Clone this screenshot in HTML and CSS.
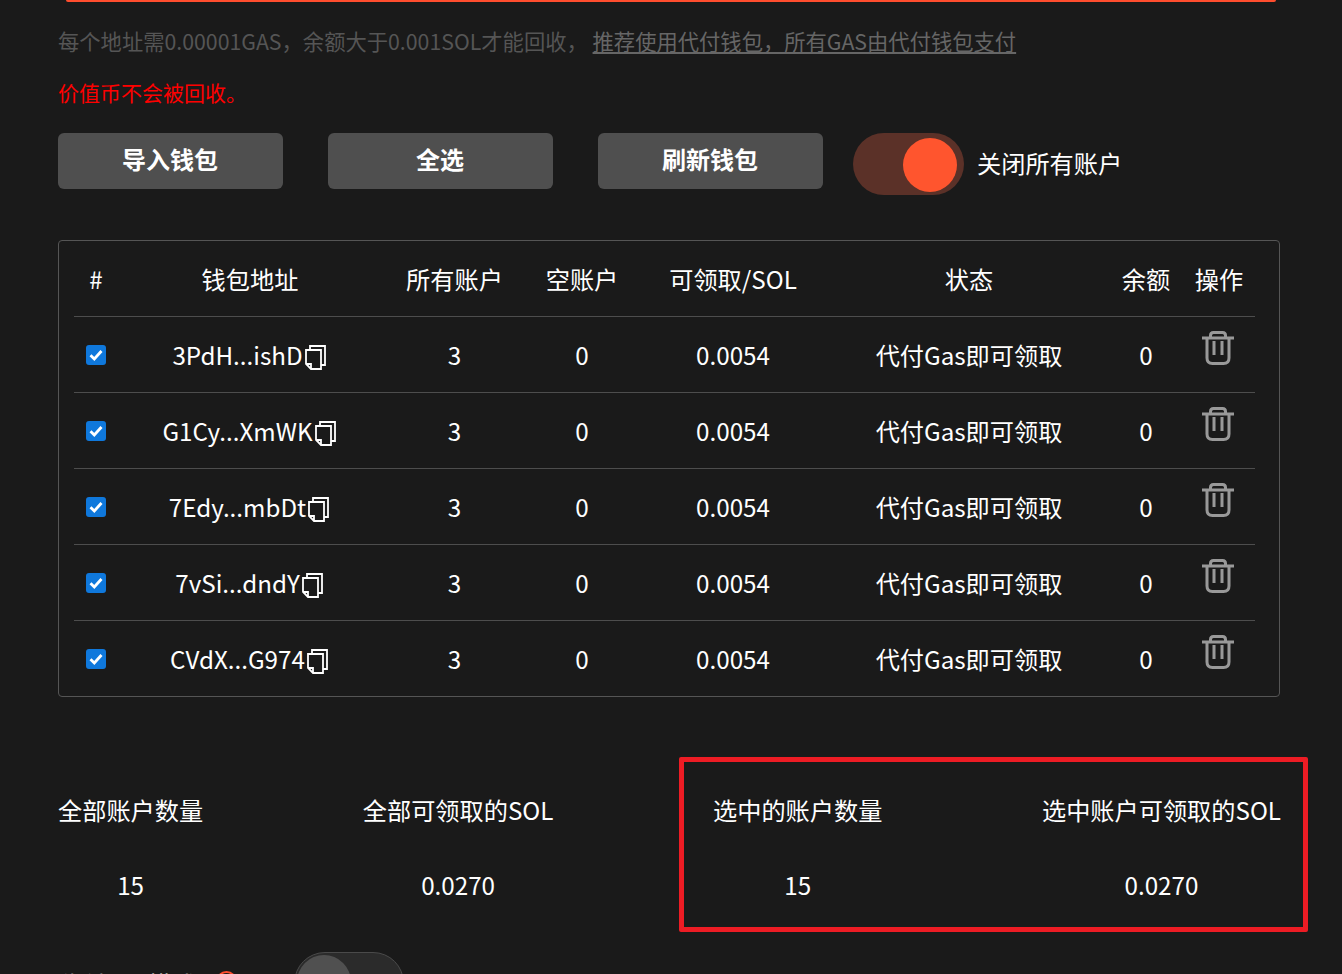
FILE: index.html
```html
<!DOCTYPE html>
<html lang="zh">
<head>
<meta charset="utf-8">
<title>关闭账户</title>
<link rel="stylesheet" href="styles.css">
</head>
<body>
<main class="page">
  <div class="topbox"></div>
  <p class="note">每个地址需0.00001GAS，余额大于0.001SOL才能回收， <a class="note-link">推荐使用代付钱包，所有GAS由代付钱包支付</a></p>
  <p class="warn">价值币不会被回收。</p>
  <div class="actions">
    <button class="btn">导入钱包</button>
    <button class="btn">全选</button>
    <button class="btn">刷新钱包</button>
    <div class="toggle-wrap">
      <span class="toggle on"><span class="thumb"></span></span>
      <span class="toggle-label">关闭所有账户</span>
    </div>
  </div>
  <div class="table-card">
    <table class="wallets">
      <colgroup>
        <col class="c1"><col class="c2"><col class="c3"><col class="c4"><col class="c5"><col class="c6"><col class="c7"><col class="c8">
      </colgroup>
      <thead>
        <tr><th>#</th><th>钱包地址</th><th>所有账户</th><th>空账户</th><th>可领取/SOL</th><th>状态</th><th>余额</th><th>操作</th></tr>
      </thead>
      <tbody>
        <tr>
          <td><span class="check"><svg viewBox="0 0 20 20" width="20" height="20"><path d="M4.500 10.200l3.800 3.800 7.200-8" fill="none" stroke="#fff" stroke-width="2.800"/></svg></span></td>
          <td class="addr">3PdH...ishD<svg class="copy" viewBox="0 0 21 25" width="21" height="25"><path d="M5 4V1h15v19h-4M1 5h15v19H6l-5-5z M1 19h5v5" fill="none" stroke="#fff" stroke-width="1.800"/></svg></td>
          <td>3</td><td>0</td><td>0.0054</td><td>代付Gas即可领取</td><td>0</td>
          <td class="op"><svg class="trash" viewBox="0 0 32 34" width="32" height="34"><path d="M0 7h32M8.500 6V4.500q0-3 3-3h9q3 0 3 3V6M5 7v20q0 5.500 5.500 5.500h11q5.500 0 5.500-5.500V7M12 10v14M20 10v14" fill="none" stroke="#999" stroke-width="3"/></svg></td>
        </tr>
        <tr>
          <td><span class="check"><svg viewBox="0 0 20 20" width="20" height="20"><path d="M4.500 10.200l3.800 3.800 7.200-8" fill="none" stroke="#fff" stroke-width="2.800"/></svg></span></td>
          <td class="addr">G1Cy...XmWK<svg class="copy" viewBox="0 0 21 25" width="21" height="25"><path d="M5 4V1h15v19h-4M1 5h15v19H6l-5-5z M1 19h5v5" fill="none" stroke="#fff" stroke-width="1.800"/></svg></td>
          <td>3</td><td>0</td><td>0.0054</td><td>代付Gas即可领取</td><td>0</td>
          <td class="op"><svg class="trash" viewBox="0 0 32 34" width="32" height="34"><path d="M0 7h32M8.500 6V4.500q0-3 3-3h9q3 0 3 3V6M5 7v20q0 5.500 5.500 5.500h11q5.500 0 5.500-5.500V7M12 10v14M20 10v14" fill="none" stroke="#999" stroke-width="3"/></svg></td>
        </tr>
        <tr>
          <td><span class="check"><svg viewBox="0 0 20 20" width="20" height="20"><path d="M4.500 10.200l3.800 3.800 7.200-8" fill="none" stroke="#fff" stroke-width="2.800"/></svg></span></td>
          <td class="addr">7Edy...mbDt<svg class="copy" viewBox="0 0 21 25" width="21" height="25"><path d="M5 4V1h15v19h-4M1 5h15v19H6l-5-5z M1 19h5v5" fill="none" stroke="#fff" stroke-width="1.800"/></svg></td>
          <td>3</td><td>0</td><td>0.0054</td><td>代付Gas即可领取</td><td>0</td>
          <td class="op"><svg class="trash" viewBox="0 0 32 34" width="32" height="34"><path d="M0 7h32M8.500 6V4.500q0-3 3-3h9q3 0 3 3V6M5 7v20q0 5.500 5.500 5.500h11q5.500 0 5.500-5.500V7M12 10v14M20 10v14" fill="none" stroke="#999" stroke-width="3"/></svg></td>
        </tr>
        <tr>
          <td><span class="check"><svg viewBox="0 0 20 20" width="20" height="20"><path d="M4.500 10.200l3.800 3.800 7.200-8" fill="none" stroke="#fff" stroke-width="2.800"/></svg></span></td>
          <td class="addr">7vSi...dndY<svg class="copy" viewBox="0 0 21 25" width="21" height="25"><path d="M5 4V1h15v19h-4M1 5h15v19H6l-5-5z M1 19h5v5" fill="none" stroke="#fff" stroke-width="1.800"/></svg></td>
          <td>3</td><td>0</td><td>0.0054</td><td>代付Gas即可领取</td><td>0</td>
          <td class="op"><svg class="trash" viewBox="0 0 32 34" width="32" height="34"><path d="M0 7h32M8.500 6V4.500q0-3 3-3h9q3 0 3 3V6M5 7v20q0 5.500 5.500 5.500h11q5.500 0 5.500-5.500V7M12 10v14M20 10v14" fill="none" stroke="#999" stroke-width="3"/></svg></td>
        </tr>
        <tr>
          <td><span class="check"><svg viewBox="0 0 20 20" width="20" height="20"><path d="M4.500 10.200l3.800 3.800 7.200-8" fill="none" stroke="#fff" stroke-width="2.800"/></svg></span></td>
          <td class="addr">CVdX...G974<svg class="copy" viewBox="0 0 21 25" width="21" height="25"><path d="M5 4V1h15v19h-4M1 5h15v19H6l-5-5z M1 19h5v5" fill="none" stroke="#fff" stroke-width="1.800"/></svg></td>
          <td>3</td><td>0</td><td>0.0054</td><td>代付Gas即可领取</td><td>0</td>
          <td class="op"><svg class="trash" viewBox="0 0 32 34" width="32" height="34"><path d="M0 7h32M8.500 6V4.500q0-3 3-3h9q3 0 3 3V6M5 7v20q0 5.500 5.500 5.500h11q5.500 0 5.500-5.500V7M12 10v14M20 10v14" fill="none" stroke="#999" stroke-width="3"/></svg></td>
        </tr>
      </tbody>
    </table>
  </div>
  <section class="stats">
    <div class="stat"><div class="stat-label">全部账户数量</div><div class="stat-value">15</div></div>
    <div class="stat"><div class="stat-label">全部可领取的SOL</div><div class="stat-value">0.0270</div></div>
    <div class="stat"><div class="stat-label">选中的账户数量</div><div class="stat-value">15</div></div>
    <div class="stat"><div class="stat-label">选中账户可领取的SOL</div><div class="stat-value">0.0270</div></div>
    <div class="highlight"></div>
  </section>
  <div class="mode-row">
    <span class="mode-label">代付Gas模式</span>
    <span class="help">?</span>
    <span class="toggle off"><span class="thumb"></span></span>
  </div>
</main>
</body>
</html>
```
FILE: styles.css
```css
* { box-sizing: border-box; }
html, body { margin: 0; height: 974px; overflow: hidden; background: #1a1a1a; }
body { font-family: "Noto Sans CJK SC", "Noto Sans", sans-serif; color: #fff; }
.page { padding: 0 61px 0 58px; }
.topbox { height: 1px; margin: 0 5px 0 8px; border-bottom: 2px solid #ff4d2e; border-radius: 0 0 12px 12px; }
.note { margin: 24px 0 0; font-size: 21.3px; line-height: 30px; color: #555; white-space: pre-wrap; }
.note-link { color: #666; text-decoration: underline; }
.warn { margin: 21px 0 0; font-size: 21px; line-height: 30px; color: #f00; }
.actions { display: flex; align-items: center; margin-top: 26px; height: 62px; }
.btn { width: 225px; height: 56px; margin: -6px 45px 0 0; padding: 0 1px 4px 0; border: 0; border-radius: 6px; background: #4f4f4f; color: #fff; font: 700 24px/32px "Noto Sans CJK SC", sans-serif; }
.toggle-wrap { display: flex; align-items: center; gap: 13px; margin-left: -15px; }
.toggle-label { font-size: 24.2px; line-height: 32px; padding-bottom: 2px; }
.toggle { display: block; position: relative; width: 111px; height: 62px; border-radius: 31px; }
.toggle.on { background: #5b3128; }
.toggle.on .thumb { position: absolute; top: 5px; right: 7px; width: 54px; height: 54px; border-radius: 50%; background: #ff552e; }
.toggle.off { background: #2b2b2b; border: 1px solid #4a4a4a; }
.toggle.off .thumb { position: absolute; top: 2px; left: 2px; width: 54px; height: 54px; border-radius: 50%; background: #505050; }
.table-card { margin-top: 45px; width: 1222px; height: 457px; padding: 0 24px 0 15px; border: 1px solid #555; border-radius: 4px; }
.wallets { width: 1181px; table-layout: fixed; border-collapse: collapse; font-size: 24.2px; }
.c1 { width: 44px; } .c2 { width: 264px; } .c3 { width: 145px; } .c4 { width: 110px; }
.c5 { width: 192px; } .c6 { width: 280px; } .c7 { width: 74px; } .c8 { width: 72px; }
.wallets th, .wallets td { padding: 0; text-align: center; font-weight: 400; line-height: 32px; border-bottom: 1px solid #4d4d4d; white-space: nowrap; }
.wallets th { height: 75px; padding-top: 2px; }
.wallets td { height: 76px; padding-top: 2px; }
.wallets td.addr { padding-right: 2px; }
.wallets tbody tr:last-child td { border-bottom: 0; }
.check { display: block; width: 20px; height: 20px; margin: -1px 0 0 12px; border-radius: 3px; background: #0f78dc; }
.check svg { display: block; }
.copy { vertical-align: -5px; margin-left: 2px; }
.wallets td.op { vertical-align: top; }
.trash { display: block; margin: 12px 0 0 19px; }
.stats { position: relative; display: flex; justify-content: space-between; width: 1223px; margin: 61px 0 0; padding-top: 36px; height: 175px; }
.stat { text-align: center; font-size: 24.2px; line-height: 32px; }
.stat-value { margin-top: 43px; }
.highlight { position: absolute; left: 621px; top: -1px; width: 629px; height: 175px; border: 5px solid #ed1c24; border-radius: 2px; }
.mode-row { display: flex; align-items: flex-start; margin-top: 19px; font-size: 24.2px; line-height: 32px; }
.mode-label { margin-top: 16px; width: 158px; }
.help { margin-top: 19px; width: 21px; height: 21px; border-radius: 50%; border: 2px solid #ff4d2e; color: #ff4d2e; font-size: 14px; line-height: 17px; text-align: center; }
.mode-row .toggle { margin-left: 57px; width: 110px; height: 62px; }
```
